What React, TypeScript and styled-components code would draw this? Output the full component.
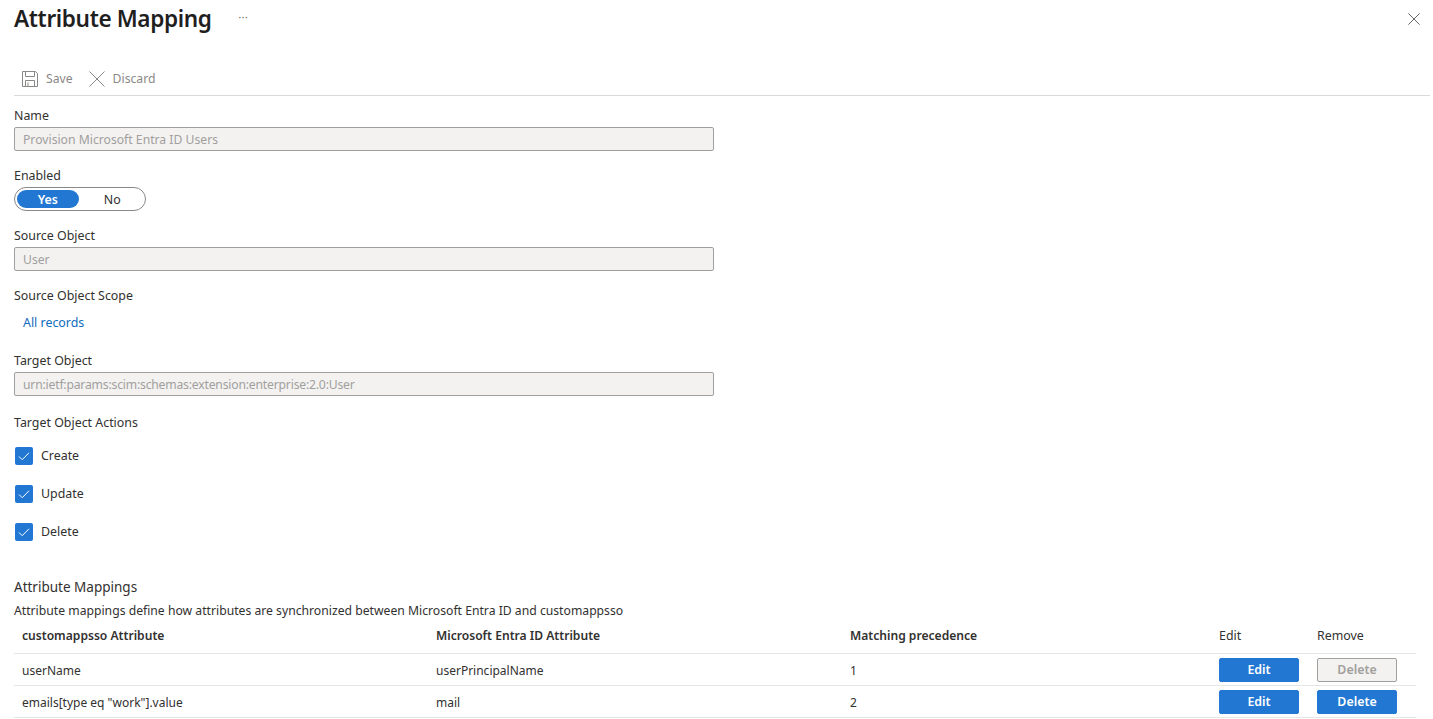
import React from 'react'
import styled, { createGlobalStyle } from 'styled-components'

const GlobalStyle = createGlobalStyle`
  html, body {
    margin: 0;
    padding: 0;
    background: #fff;
    overflow: hidden;
  }
  body {
    font-family: "Noto Sans", "Open Sans", sans-serif;
    font-size: 12.4px;
    color: #323130;
  }
`

const Page = styled.div`
  width: 1433px;
  height: 719px;
  overflow: hidden;
  box-sizing: border-box;
  padding: 0 3px 0 14px;
`

const TitleRow = styled.div`
  display: flex;
  align-items: center;
  height: 38px;
`

const Title = styled.h1`
  margin: 0;
  font-size: 22.6px;
  font-weight: 600;
  color: #1f1f1f;
  line-height: 38px;
  letter-spacing: -0.38px;
`

const More = styled.span`
  margin-left: 27px;
  margin-top: -4px;
  font-size: 10px;
  letter-spacing: 0.5px;
  color: #605e5c;
`

const Close = styled.button`
  margin-left: auto;
  margin-right: 10px;
  margin-top: 0;
  padding: 0;
  border: 0;
  background: none;
  display: flex;
`

const Toolbar = styled.div`
  display: flex;
  align-items: center;
  height: 58px;
  box-sizing: border-box;
  padding: 24px 0 0 8px;
  border-bottom: 1px solid #d9d9d9;
`

const ToolButton = styled.span`
  display: flex;
  align-items: center;
  gap: 8px;
  margin-right: 16px;
  color: #8a8886;
  font-size: 12.2px;
`

const Form = styled.div`
  width: 700px;
`

const Field = styled.div`
  margin-top: ${p => p.$top ?? 9}px;
`

const Label = styled.div`
  line-height: 20px;
  color: #323130;
`

const Input = styled.div`
  height: 24px;
  box-sizing: border-box;
  margin-top: 1px;
  padding-left: 8px;
  border: 1px solid #a19f9d;
  border-radius: 2px;
  background: #f3f2f1;
  color: #a19f9d;
  font-size: 12.2px;
  line-height: 24px;
  letter-spacing: ${p => (p.$tight ? '-0.2px' : '0')};
`

const Toggle = styled.div`
  width: 132px;
  height: 24px;
  box-sizing: border-box;
  margin-top: 1px;
  padding: 2px;
  display: flex;
  border: 1px solid #8a8886;
  border-radius: 12px;
`

const ToggleOption = styled.span`
  width: 63px;
  height: 18px;
  border-radius: 9px;
  text-align: center;
  line-height: 19px;
  background: ${p => (p.$on ? '#2177d2' : 'transparent')};
  color: ${p => (p.$on ? '#fff' : '#323130')};
  font-weight: ${p => (p.$on ? 600 : 400)};
  &:last-child {
    margin-left: 3px;
  }
`

const ScopeLink = styled.a`
  display: block;
  margin-top: 7px;
  padding-left: 9px;
  line-height: 20px;
  color: #0f6cbd;
`

const CheckRow = styled.label`
  display: flex;
  align-items: center;
  gap: 8px;
  height: 20px;
  margin-top: 18px;
  margin-left: 1px;
  &:first-of-type {
    margin-top: 12px;
  }
`

const CheckBox = styled.span`
  width: 18px;
  height: 18px;
  margin-top: 2px;
  border-radius: 2px;
  background: #2177d2;
  display: flex;
  align-items: center;
  justify-content: center;
`

const SectionTitle = styled.div`
  margin-top: 36px;
  line-height: 20px;
  font-size: 13.5px;
`

const SectionText = styled.div`
  margin-top: 4px;
  line-height: 20px;
  font-size: 12.2px;
`

const Table = styled.table`
  width: 1402px;
  border-collapse: collapse;
  table-layout: fixed;
`

const HeadCell = styled.th`
  height: 32px;
  box-sizing: border-box;
  padding: 0 0 2px 8px;
  text-align: left;
  font-weight: 600;
  font-size: 12.1px;
  color: #323130;
  border-bottom: 1px solid #e6e6e6;
`

const PlainHead = styled(HeadCell)`
  font-weight: 400;
  font-size: 12.4px;
  padding-left: 0;
`

const Cell = styled.td`
  height: 32px;
  box-sizing: border-box;
  padding: 2px 0 0 8px;
  font-size: 12px;
  border-bottom: 1px solid #e6e6e6;
`

const ButtonCell = styled(Cell)`
  padding: 2px 0 0;
`

const ActionButton = styled.button`
  display: block;
  width: 80px;
  height: 24px;
  padding: 0;
  border-radius: 2px;
  border: 1px solid ${p => (p.disabled ? '#a19f9d' : '#2177d2')};
  background: ${p => (p.disabled ? '#f3f2f1' : '#2177d2')};
  color: ${p => (p.disabled ? '#a19f9d' : '#fff')};
  font-family: inherit;
  font-size: 12.4px;
  font-weight: 600;
  line-height: 20px;
`

const rows = [
  { target: 'userName', source: 'userPrincipalName', order: 1, removable: false },
  { target: 'emails[type eq "work"].value', source: 'mail', order: 2, removable: true },
]

const actions = ['Create', 'Update', 'Delete']

const SaveIcon = () => (
  <svg width="16" height="16" viewBox="0 0 16 16" fill="none" stroke="#8a8886" strokeWidth="1">
    <path d="M.5.5h13l2 2v13H.5z" />
    <path d="M3.5.5v5h9v-5M3.5 15.5v-6h9v6M6 11.5v4" />
  </svg>
)

const CrossIcon = ({ size, color }: { size: number; color: string }) => (
  <svg width={size} height={size} viewBox="0 0 16 16" fill="none" stroke={color} strokeWidth="1">
    <path d="M.5.5l15 15M15.5.5l-15 15" />
  </svg>
)

const CheckIcon = () => (
  <svg width="12" height="12" viewBox="0 0 12 12" fill="none" stroke="#fff" strokeWidth="1">
    <path d="M1 6.5l3.2 3.2L11 2.8" />
  </svg>
)

export default function App() {
  return (
    <Page>
      <GlobalStyle />
      <TitleRow>
        <Title>Attribute Mapping</Title>
        <More>···</More>
        <Close aria-label="Close">
          <CrossIcon size={12} color="#323130" />
        </Close>
      </TitleRow>
      <Toolbar>
        <ToolButton>
          <SaveIcon />
          Save
        </ToolButton>
        <ToolButton>
          <CrossIcon size={16} color="#8a8886" />
          Discard
        </ToolButton>
      </Toolbar>
      <Form>
        <Field $top={10}>
          <Label>Name</Label>
          <Input>Provision Microsoft Entra ID Users</Input>
        </Field>
        <Field $top={15}>
          <Label>Enabled</Label>
          <Toggle>
            <ToggleOption $on>Yes</ToggleOption>
            <ToggleOption>No</ToggleOption>
          </Toggle>
        </Field>
        <Field $top={15}>
          <Label>Source Object</Label>
          <Input>User</Input>
        </Field>
        <Field $top={15}>
          <Label>Source Object Scope</Label>
          <ScopeLink>All records</ScopeLink>
        </Field>
        <Field $top={18}>
          <Label>Target Object</Label>
          <Input $tight>urn:ietf:params:scim:schemas:extension:enterprise:2.0:User</Input>
        </Field>
        <Field $top={17}>
          <Label>Target Object Actions</Label>
          {actions.map(action => (
            <CheckRow key={action}>
              <CheckBox>
                <CheckIcon />
              </CheckBox>
              {action}
            </CheckRow>
          ))}
        </Field>
      </Form>
      <SectionTitle>Attribute Mappings</SectionTitle>
      <SectionText>
        Attribute mappings define how attributes are synchronized between Microsoft Entra ID and customappsso
      </SectionText>
      <Table>
        <colgroup>
          <col width="414" />
          <col width="414" />
          <col width="377" />
          <col width="98" />
          <col />
        </colgroup>
        <thead>
          <tr>
            <HeadCell>customappsso Attribute</HeadCell>
            <HeadCell>Microsoft Entra ID Attribute</HeadCell>
            <HeadCell>Matching precedence</HeadCell>
            <PlainHead>Edit</PlainHead>
            <PlainHead>Remove</PlainHead>
          </tr>
        </thead>
        <tbody>
          {rows.map(row => (
            <tr key={row.target}>
              <Cell>{row.target}</Cell>
              <Cell>{row.source}</Cell>
              <Cell>{row.order}</Cell>
              <ButtonCell>
                <ActionButton>Edit</ActionButton>
              </ButtonCell>
              <ButtonCell>
                <ActionButton disabled={!row.removable}>Delete</ActionButton>
              </ButtonCell>
            </tr>
          ))}
        </tbody>
      </Table>
    </Page>
  )
}
